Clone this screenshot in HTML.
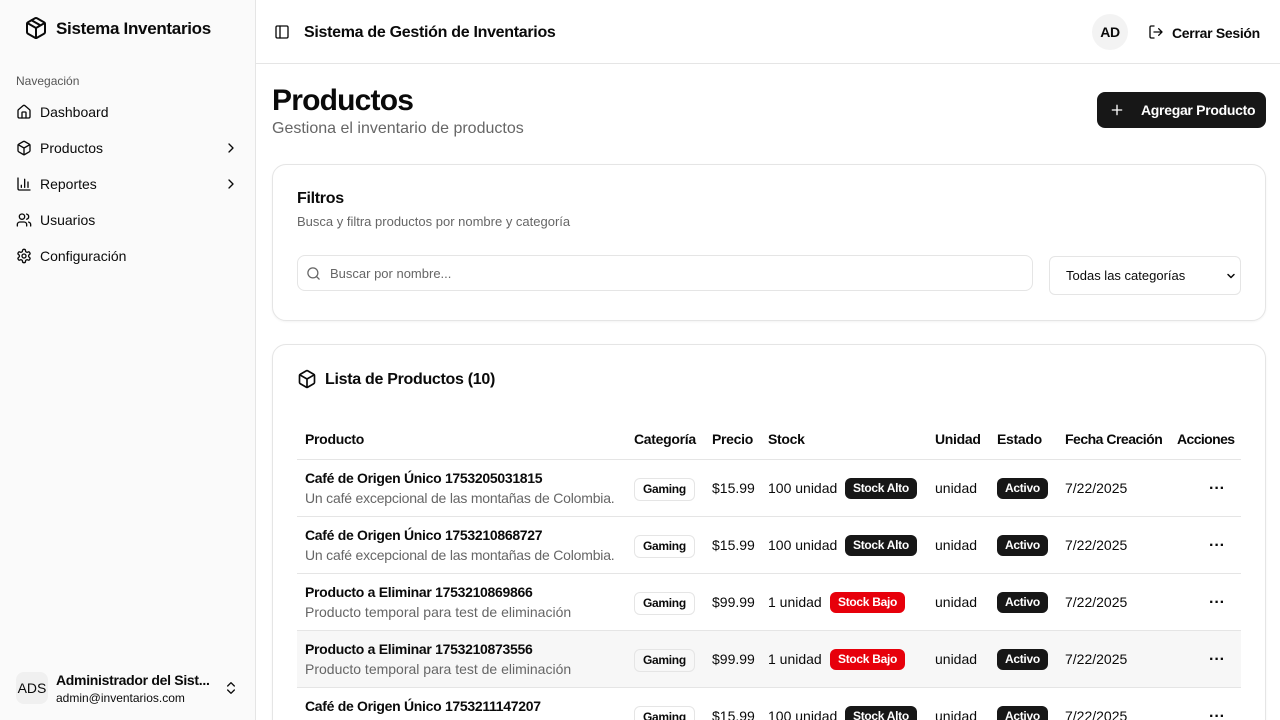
<!DOCTYPE html>
<html style="overflow:hidden;height:720px"><head><meta charset="utf-8"><style>
*{box-sizing:border-box;margin:0;padding:0}
body{width:1280px;height:720px;overflow:hidden;font-family:"Liberation Sans",sans-serif;color:#0a0a0a;background:#fff;position:relative;font-size:14px}
.a{position:absolute;white-space:nowrap}
.side{position:absolute;left:0;top:0;width:256px;height:720px;background:#fafafa;border-right:1px solid #e5e5e5}
svg{fill:none;stroke:#0a0a0a;stroke-width:2;stroke-linecap:round;stroke-linejoin:round}
.nav{position:absolute;left:16px;font-size:14px;display:flex;align-items:center;gap:8px}
.card{position:absolute;border:1px solid #e5e5e5;border-radius:14px;background:#fff;box-shadow:0 1px 2px rgba(0,0,0,.05)}
.badge{display:inline-block;font-size:12px;font-weight:bold;padding:2px 8px;border-radius:6px;line-height:17px;letter-spacing:-0.3px}
.dark{background:#171717;color:#fff}
.red{background:#e7000b;color:#fff}
.out{border:1px solid #e5e5e5;color:#0a0a0a}
.row{position:absolute;left:297px;width:944px;height:57px;border-bottom:1px solid #e5e5e5}
.b{font-weight:bold;letter-spacing:-0.3px}
.dots{font-weight:bold;font-size:16px;line-height:10px}
</style></head><body>
<div class="side">
 <svg class="a" style="left:24px;top:16px" width="24" height="24" viewBox="0 0 24 24"><path d="M21 8a2 2 0 0 0-1-1.73l-7-4a2 2 0 0 0-2 0l-7 4A2 2 0 0 0 3 8v8a2 2 0 0 0 1 1.73l7 4a2 2 0 0 0 2 0l7-4A2 2 0 0 0 21 16Z"/><path d="m3.3 7 8.7 5 8.7-5M12 22V12M7.5 4.27l9 5.15"/></svg>
 <div class="a b" style="left:56px;top:19px;font-size:17px">Sistema Inventarios</div>
 <div class="a" style="left:16px;top:74px;font-size:12px;color:#555">Navegación</div>
 <div class="nav" style="top:104px"><svg width="16" height="16" viewBox="0 0 24 24"><path d="M15 21v-8a1 1 0 0 0-1-1h-4a1 1 0 0 0-1 1v8"/><path d="M3 10a2 2 0 0 1 .7-1.5l7-6a2 2 0 0 1 2.6 0l7 6A2 2 0 0 1 21 10v9a2 2 0 0 1-2 2H5a2 2 0 0 1-2-2z"/></svg>Dashboard</div>
 <div class="nav" style="top:140px"><svg width="16" height="16" viewBox="0 0 24 24"><path d="M21 8a2 2 0 0 0-1-1.73l-7-4a2 2 0 0 0-2 0l-7 4A2 2 0 0 0 3 8v8a2 2 0 0 0 1 1.73l7 4a2 2 0 0 0 2 0l7-4A2 2 0 0 0 21 16Z"/><path d="m3.3 7 8.7 5 8.7-5M12 22V12"/></svg>Productos</div>
 <svg class="a" style="left:223px;top:140px" width="16" height="16" viewBox="0 0 24 24"><path d="m9 18 6-6-6-6"/></svg>
 <div class="nav" style="top:176px"><svg width="16" height="16" viewBox="0 0 24 24"><path d="M3 3v16a2 2 0 0 0 2 2h16M18 17V9M13 17V5M8 17v-3"/></svg>Reportes</div>
 <svg class="a" style="left:223px;top:176px" width="16" height="16" viewBox="0 0 24 24"><path d="m9 18 6-6-6-6"/></svg>
 <div class="nav" style="top:212px"><svg width="16" height="16" viewBox="0 0 24 24"><path d="M16 21v-2a4 4 0 0 0-4-4H6a4 4 0 0 0-4 4v2"/><circle cx="9" cy="7" r="4"/><path d="M22 21v-2a4 4 0 0 0-3-3.870M16 3.13a4 4 0 0 1 0 7.75"/></svg>Usuarios</div>
 <div class="nav" style="top:248px"><svg width="16" height="16" viewBox="0 0 24 24"><circle cx="12" cy="12" r="3"/><path d="M12.22 2h-.44a2 2 0 0 0-2 2v.18a2 2 0 0 1-1 1.73l-.43.25a2 2 0 0 1-2 0l-.15-.08a2 2 0 0 0-2.73.73l-.22.38a2 2 0 0 0 .73 2.73l.15.1a2 2 0 0 1 1 1.72v.51a2 2 0 0 1-1 1.74l-.15.09a2 2 0 0 0-.73 2.730l.22.38a2 2 0 0 0 2.73.73l.15-.08a2 2 0 0 1 2 0l.43.25a2 2 0 0 1 1 1.73V20a2 2 0 0 0 2 2h.44a2 2 0 0 0 2-2v-.18a2 2 0 0 1 1-1.73l.43-.25a2 2 0 0 1 2 0l.15.08a2 2 0 0 0 2.73-.73l.22-.39a2 2 0 0 0-.73-2.73l-.15-.08a2 2 0 0 1-1-1.74v-.5a2 2 0 0 1 1-1.74l.15-.09a2 2 0 0 0 .73-2.73l-.22-.38a2 2 0 0 0-2.73-.73l-.15.08a2 2 0 0 1-2 0l-.43-.25a2 2 0 0 1-1-1.73V4a2 2 0 0 0-2-2z"/></svg>Configuración</div>
 <div class="a" style="left:16px;top:672px;width:32px;height:32px;border-radius:8px;background:#f0f0f0;font-size:14px;line-height:32px;text-align:center">ADS</div>
 <div class="a b" style="left:56px;top:672px;font-size:14px">Administrador del Sist...</div>
 <div class="a" style="left:56px;top:691px;font-size:12px">admin@inventarios.com</div>
 <svg class="a" style="left:223px;top:680px" width="16" height="16" viewBox="0 0 24 24"><path d="m7 15 5 5 5-5M7 9l5-5 5 5"/></svg>
</div>
<div class="a" style="left:256px;top:63px;width:1024px;height:1px;background:#e5e5e5"></div>
<svg class="a" style="left:274px;top:24px" width="16" height="16" viewBox="0 0 24 24"><rect x="3" y="3" width="18" height="18" rx="2"/><path d="M9 3v18"/></svg>
<div class="a b" style="left:304px;top:24px;font-size:16px">Sistema de Gestión de Inventarios</div>
<div class="a b" style="left:1092px;top:14px;width:36px;height:36px;border-radius:50%;background:#f3f3f3;text-align:center;line-height:36px;font-size:14px">AD</div>
<svg class="a" style="left:1148px;top:24px" width="16" height="16" viewBox="0 0 24 24"><path d="M9 21H5a2 2 0 0 1-2-2V5a2 2 0 0 1 2-2h4M16 17l5-5-5-5M21 12H9"/></svg>
<div class="a b" style="left:1172px;top:25px;font-size:14px">Cerrar Sesión</div>

<div class="a b" style="left:272px;top:84px;font-size:30px;letter-spacing:-0.8px">Productos</div>
<div class="a" style="left:272px;top:120px;font-size:16px;color:#666">Gestiona el inventario de productos</div>
<div class="a b" style="left:1097px;top:92px;width:169px;height:36px;border-radius:8px;background:#171717;color:#fff;font-size:14px;line-height:36px;padding-left:44px">Agregar Producto</div>
<svg class="a" style="left:1109px;top:102px;stroke:#fff" width="16" height="16" viewBox="0 0 24 24"><path d="M5 12h14M12 5v14"/></svg>

<div class="card" style="left:272px;top:164px;width:994px;height:157px"></div>
<div class="a b" style="left:297px;top:190px;font-size:16px">Filtros</div>
<div class="a" style="left:297px;top:214px;font-size:13px;color:#666">Busca y filtra productos por nombre y categoría</div>
<div class="a" style="left:297px;top:255px;width:736px;height:36px;border:1px solid #e5e5e5;border-radius:8px"></div>
<svg class="a" style="left:306px;top:266px;stroke:#666" width="15" height="15" viewBox="0 0 24 24"><circle cx="11" cy="11" r="8"/><path d="m21 21-4.3-4.3"/></svg>
<div class="a" style="left:330px;top:266px;font-size:13px;color:#666">Buscar por nombre...</div>
<div class="a" style="left:1049px;top:256px;width:192px;height:39px;border:1px solid #e5e5e5;border-radius:6px;font-size:13px;line-height:37px;padding-left:16px">Todas las categorías</div>
<svg class="a" style="left:1225px;top:270px" width="12" height="12" viewBox="0 0 24 24"><path d="m6 9 6 6 6-6" style="stroke-width:3"/></svg>

<div class="card" style="left:272px;top:344px;width:994px;height:400px"></div>
<svg class="a" style="left:297px;top:369px" width="20" height="20" viewBox="0 0 24 24"><path d="M21 8a2 2 0 0 0-1-1.73l-7-4a2 2 0 0 0-2 0l-7 4A2 2 0 0 0 3 8v8a2 2 0 0 0 1 1.73l7 4a2 2 0 0 0 2 0l7-4A2 2 0 0 0 21 16Z"/><path d="m3.3 7 8.7 5 8.7-5M12 22V12"/></svg>
<div class="a b" style="left:325px;top:371px;font-size:16px">Lista de Productos (10)</div>

<div class="row" style="top:419px;height:41px"></div>
<div class="a b" style="left:305px;top:431px">Producto</div>
<div class="a b" style="left:634px;top:431px">Categoría</div>
<div class="a b" style="left:712px;top:431px">Precio</div>
<div class="a b" style="left:768px;top:431px">Stock</div>
<div class="a b" style="left:935px;top:431px">Unidad</div>
<div class="a b" style="left:997px;top:431px">Estado</div>
<div class="a b" style="left:1065px;top:431px;letter-spacing:-0.5px">Fecha Creación</div>
<div class="a b" style="left:1177px;top:431px;letter-spacing:-0.6px">Acciones</div>

<div class="row" style="top:460px"></div>
<div class="row" style="top:517px"></div>
<div class="row" style="top:574px"></div>
<div class="row" style="top:631px;background:#f7f7f7"></div>
<div class="row" style="top:688px"></div>

<div class="a b" style="left:305px;top:470px">Café de Origen Único 1753205031815</div>
<div class="a" style="left:305px;top:490px;color:#666;letter-spacing:-0.2px">Un café excepcional de las montañas de Colombia.</div>
<div class="a b" style="left:305px;top:527px">Café de Origen Único 1753210868727</div>
<div class="a" style="left:305px;top:547px;color:#666;letter-spacing:-0.2px">Un café excepcional de las montañas de Colombia.</div>
<div class="a b" style="left:305px;top:584px">Producto a Eliminar 1753210869866</div>
<div class="a" style="left:305px;top:604px;color:#666">Producto temporal para test de eliminación</div>
<div class="a b" style="left:305px;top:641px">Producto a Eliminar 1753210873556</div>
<div class="a" style="left:305px;top:661px;color:#666">Producto temporal para test de eliminación</div>
<div class="a b" style="left:305px;top:698px">Café de Origen Único 1753211147207</div>

<div class="a badge out" style="left:634px;top:478px">Gaming</div>
<div class="a badge out" style="left:634px;top:535px">Gaming</div>
<div class="a badge out" style="left:634px;top:592px">Gaming</div>
<div class="a badge out" style="left:634px;top:649px">Gaming</div>
<div class="a badge out" style="left:634px;top:706px">Gaming</div>

<div class="a" style="left:712px;top:480px">$15.99</div>
<div class="a" style="left:712px;top:537px">$15.99</div>
<div class="a" style="left:712px;top:594px">$99.99</div>
<div class="a" style="left:712px;top:651px">$99.99</div>
<div class="a" style="left:712px;top:708px">$15.99</div>

<div class="a" style="left:768px;top:480px">100 unidad</div>
<div class="a badge dark" style="left:845px;top:478px">Stock Alto</div>
<div class="a" style="left:768px;top:537px">100 unidad</div>
<div class="a badge dark" style="left:845px;top:535px">Stock Alto</div>
<div class="a" style="left:768px;top:594px">1 unidad</div>
<div class="a badge red" style="left:830px;top:592px">Stock Bajo</div>
<div class="a" style="left:768px;top:651px">1 unidad</div>
<div class="a badge red" style="left:830px;top:649px">Stock Bajo</div>
<div class="a" style="left:768px;top:708px">100 unidad</div>
<div class="a badge dark" style="left:845px;top:706px">Stock Alto</div>

<div class="a" style="left:935px;top:480px">unidad</div>
<div class="a" style="left:935px;top:537px">unidad</div>
<div class="a" style="left:935px;top:594px">unidad</div>
<div class="a" style="left:935px;top:651px">unidad</div>
<div class="a" style="left:935px;top:708px">unidad</div>

<div class="a badge dark" style="left:997px;top:478px">Activo</div>
<div class="a badge dark" style="left:997px;top:535px">Activo</div>
<div class="a badge dark" style="left:997px;top:592px">Activo</div>
<div class="a badge dark" style="left:997px;top:649px">Activo</div>
<div class="a badge dark" style="left:997px;top:706px">Activo</div>

<div class="a" style="left:1065px;top:480px">7/22/2025</div>
<div class="a" style="left:1065px;top:537px">7/22/2025</div>
<div class="a" style="left:1065px;top:594px">7/22/2025</div>
<div class="a" style="left:1065px;top:651px">7/22/2025</div>
<div class="a" style="left:1065px;top:708px">7/22/2025</div>

<div class="a dots" style="left:1209px;top:484px">···</div>
<div class="a dots" style="left:1209px;top:541px">···</div>
<div class="a dots" style="left:1209px;top:598px">···</div>
<div class="a dots" style="left:1209px;top:655px">···</div>
<div class="a dots" style="left:1209px;top:712px">···</div>
</body></html>
